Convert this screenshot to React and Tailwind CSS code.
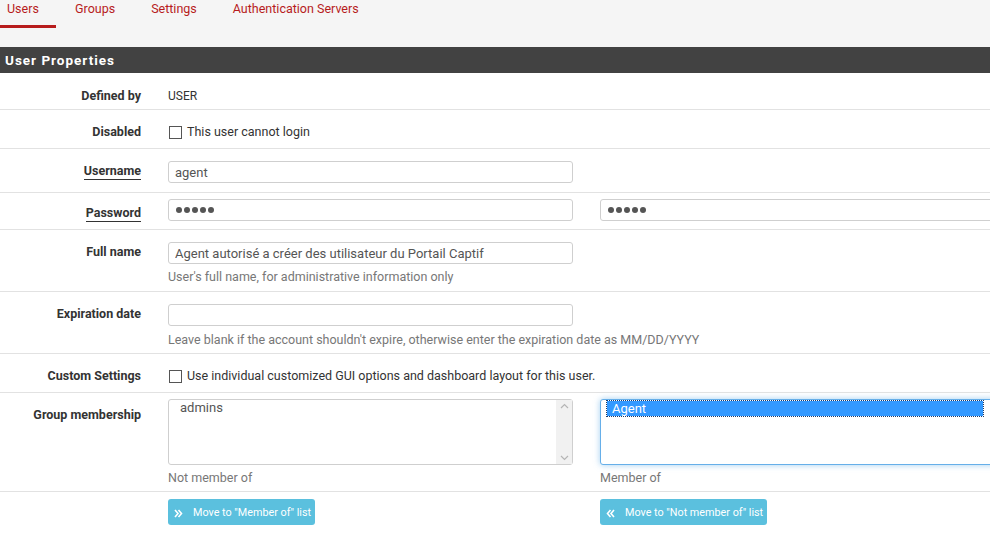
import React from "react";

const Label = ({ children, underline, className = "" }) => (
  <div className={"w-[141px] shrink-0 text-right text-[12.5px] font-bold text-[#333] " + className}>
    <span className={underline ? "border-b-[1.5px] border-[#333] pb-[1px]" : ""}>{children}</span>
  </div>
);

const Input = ({ value, className = "" }) => (
  <input
    readOnly
    type="text"
    value={value}
    className={"h-[22px] shrink-0 rounded-[3px] border border-[#cfcfcf] bg-white px-[6px] text-[13px] text-[#555] outline-none " + className}
  />
);

const Dots = ({ className = "" }) => (
  <div className={"flex h-[22px] shrink-0 items-center gap-[2px] rounded-[3px] border border-[#cfcfcf] bg-white pl-[7px] " + className}>
    {[0, 1, 2, 3, 4].map((i) => (
      <span key={i} className="h-[6px] w-[6px] rounded-full bg-[#555]"></span>
    ))}
  </div>
);

const Check = () => (
  <span className="inline-block h-[13px] w-[13px] shrink-0 border border-[#555] bg-white"></span>
);

const Row = ({ children, className = "" }) => (
  <div className={"flex border-b border-[#e2e2e2] " + className}>{children}</div>
);

const DoubleAngle = ({ left }) => (
  <svg width="9" height="9" viewBox="0 0 9 9">
    {left ? (
      <path d="M4.5 1 L1.5 4.5 L4.5 8 M8 1 L5 4.5 L8 8" fill="none" stroke="white" strokeWidth="1.6" />
    ) : (
      <path d="M1 1 L4 4.5 L1 8 M4.5 1 L7.5 4.5 L4.5 8" fill="none" stroke="white" strokeWidth="1.6" />
    )}
  </svg>
);

export default function App() {
  return (
    <div className="h-[537px] w-[990px] overflow-hidden bg-white" style={{ fontFamily: "Roboto, 'Noto Sans', sans-serif" }}>
      <div className="h-[47px] bg-[#f5f5f5]">
        <div className="flex text-[12.5px] text-[#b71c1c]">
          <div className="flex h-[28px] w-[56px] flex-col">
            <span className="pl-[7px] leading-[17px]">Users</span>
            <span className="mt-auto h-[3px] w-full bg-[#b71c1c]"></span>
          </div>
          <span className="ml-[19px] leading-[17px]">Groups</span>
          <span className="ml-[36px] leading-[17px]">Settings</span>
          <span className="ml-[36px] leading-[17px]">Authentication Servers</span>
        </div>
      </div>
      <div className="flex h-[26px] items-center bg-[#424242] pl-[5px] text-[13.5px] font-bold tracking-[1px] text-white">
        User Properties
      </div>

      <Row className="h-[37px] items-center pt-[10px]">
        <Label>Defined by</Label>
        <div className="ml-[27px] text-[12px] text-[#333]">USER</div>
      </Row>

      <Row className="h-[39px] items-center pt-[7px]">
        <Label>Disabled</Label>
        <div className="ml-[28px] flex items-center gap-[5px] text-[12.5px] text-[#333]">
          <Check />
          <span>This user cannot login</span>
        </div>
      </Row>

      <Row className="h-[44px] pt-[12px]">
        <Label underline className="pt-[1px]">Username</Label>
        <Input value="agent" className="ml-[27px] w-[405px]" />
      </Row>

      <Row className="h-[37px] pt-[6px]">
        <Label underline className="pt-[5px]">Password</Label>
        <Dots className="ml-[27px] w-[405px]" />
        <Dots className="ml-[27px] w-[405px]" />
      </Row>

      <Row className="h-[62px] pt-[12px]">
        <Label className="pt-[1px]">Full name</Label>
        <div className="ml-[27px] flex flex-col">
          <Input value="Agent autorisé a créer des utilisateur du Portail Captif" className="w-[405px]" />
          <span className="mt-[4px] text-[12.5px] text-[#777]">User's full name, for administrative information only</span>
        </div>
      </Row>

      <Row className="h-[62px] pt-[12px]">
        <Label className="pt-[1px]">Expiration date</Label>
        <div className="ml-[27px] flex flex-col">
          <Input value="" className="w-[405px]" />
          <span className="mt-[5px] text-[12.5px] text-[#777]">
            Leave blank if the account shouldn't expire, otherwise enter the expiration date as MM/DD/YYYY
          </span>
        </div>
      </Row>

      <Row className="h-[39px] items-center pt-[7px]">
        <Label>Custom Settings</Label>
        <div className="ml-[28px] flex items-center gap-[5px] text-[12.5px] text-[#333]">
          <Check />
          <span>Use individual customized GUI options and dashboard layout for this user.</span>
        </div>
      </Row>

      <Row className="h-[99px] pt-[6px]">
        <Label className="pt-[7px]">Group membership</Label>
        <div className="ml-[27px] flex w-[405px] shrink-0 flex-col">
          <div className="flex h-[66px] rounded-[3px] border border-[#cfcfcf] bg-white">
            <div className="flex-1 pl-[11px] text-[13px] leading-[15px] text-[#555]">admins</div>
            <div className="flex w-[16px] flex-col items-center justify-between bg-[#f1f1f1] py-[3px]">
              <svg width="9" height="6" viewBox="0 0 9 6"><path d="M1 5 L4.5 1.5 L8 5" fill="none" stroke="#b5b5b5" strokeWidth="1.2" /></svg>
              <svg width="9" height="6" viewBox="0 0 9 6"><path d="M1 1 L4.5 4.5 L8 1" fill="none" stroke="#b5b5b5" strokeWidth="1.2" /></svg>
            </div>
          </div>
          <span className="mt-[4px] text-[12.5px] text-[#777]">Not member of</span>
        </div>
        <div className="ml-[27px] flex w-[405px] shrink-0 flex-col">
          <div className="h-[66px] rounded-[3px] border border-[#66afe9] bg-white pl-[6px] pt-[1px] shadow-[0_0_6px_rgba(102,175,233,0.6)]">
            <div className="w-[376px] bg-[#3399ff] pl-[5px] text-[13px] leading-[15px] text-white outline-1 outline-dotted outline-[#1a3a6a]">
              Agent
            </div>
          </div>
          <span className="mt-[4px] text-[12.5px] text-[#777]">Member of</span>
        </div>
      </Row>

      <div className="flex pt-[7px]">
        <div className="w-[141px] shrink-0"></div>
        <div className="ml-[27px] w-[405px] shrink-0">
          <button className="flex h-[26px] w-[147px] items-center rounded-[3px] bg-[#5bc0de] pl-[6px] pt-[2px] text-[10.8px] text-white">
            <DoubleAngle />
            <span className="ml-[10px]">Move to "Member of" list</span>
          </button>
        </div>
        <div className="ml-[27px] shrink-0">
          <button className="flex h-[26px] w-[167px] items-center rounded-[3px] bg-[#5bc0de] pl-[6px] pt-[2px] text-[10.8px] text-white">
            <DoubleAngle left />
            <span className="ml-[10px]">Move to "Not member of" list</span>
          </button>
        </div>
      </div>
    </div>
  );
}
